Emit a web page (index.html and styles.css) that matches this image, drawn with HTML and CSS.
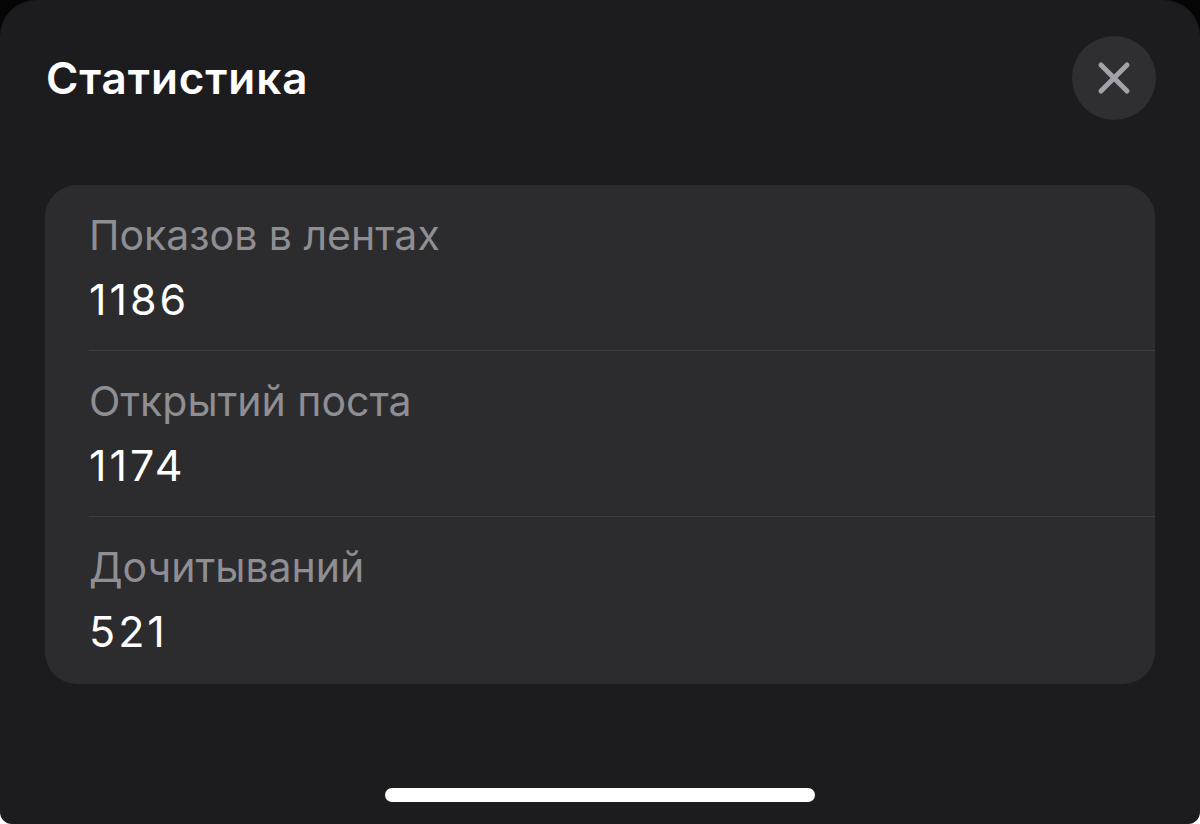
FILE: index.html
```html
<!DOCTYPE html>
<html lang="ru">
<head>
<meta charset="utf-8">
<title>Статистика</title>
<link rel="stylesheet" href="styles.css">
</head>
<body>
<div class="sheet">
  <header class="header">
    <h1 class="title">Статистика</h1>
    <button class="close" aria-label="Закрыть">
      <svg width="34" height="34" viewBox="0 0 34 34"><path d="M4 4 L30 30 M30 4 L4 30" stroke="#a2a2a9" stroke-width="5" stroke-linecap="round" fill="none"/></svg>
    </button>
  </header>
  <section class="card">
    <div class="row">
      <div class="label">Показов в лентах</div>
      <div class="value">1186</div>
    </div>
    <div class="row">
      <div class="label">Открытий поста</div>
      <div class="value">1174</div>
    </div>
    <div class="row last">
      <div class="label">Дочитываний</div>
      <div class="value">521</div>
    </div>
  </section>
  <div class="home"></div>
</div>
</body>
</html>
```
FILE: styles.css
```css
html, body {
  margin: 0;
  padding: 0;
  width: 1200px;
  height: 824px;
  overflow: hidden;
}
body {
  background: linear-gradient(#050505 50%, #ffffff 50%);
  font-family: Inter, "Noto Sans", "Liberation Sans", sans-serif;
}
.sheet {
  width: 1200px;
  height: 824px;
  background: #1c1c1e;
  border-radius: 36px 36px 12px 12px;
  display: flex;
  flex-direction: column;
  box-sizing: border-box;
}
.header {
  display: flex;
  align-items: center;
  justify-content: space-between;
  padding: 36px 44px 0 46px;
}
.title {
  margin: 0;
  color: #ffffff;
  font-size: 44px;
  font-weight: 600;
  line-height: 84px;
  letter-spacing: 0.9px;
}
.close {
  width: 84px;
  height: 84px;
  border-radius: 50%;
  border: none;
  padding: 0;
  background: #2f2f32;
  display: flex;
  align-items: center;
  justify-content: center;
}
.card {
  margin: 65px 45px 0 45px;
  background: #2c2c2e;
  border-radius: 32px;
  padding-left: 44px;
}
.row {
  padding: 24px 0 25px 0;
  border-bottom: 1px solid #3d3d40;
  display: flex;
  flex-direction: column;
  gap: 12px;
}
.row.last {
  border-bottom: none;
  padding-bottom: 27px;
}
.label {
  color: #8e8e93;
  font-size: 41px;
  line-height: 52px;
}
.value {
  color: #ffffff;
  font-size: 43px;
  line-height: 52px;
  letter-spacing: 3px;
}
.home {
  margin: auto auto 22px auto;
  width: 430px;
  height: 14px;
  border-radius: 7px;
  background: #ffffff;
}
```
